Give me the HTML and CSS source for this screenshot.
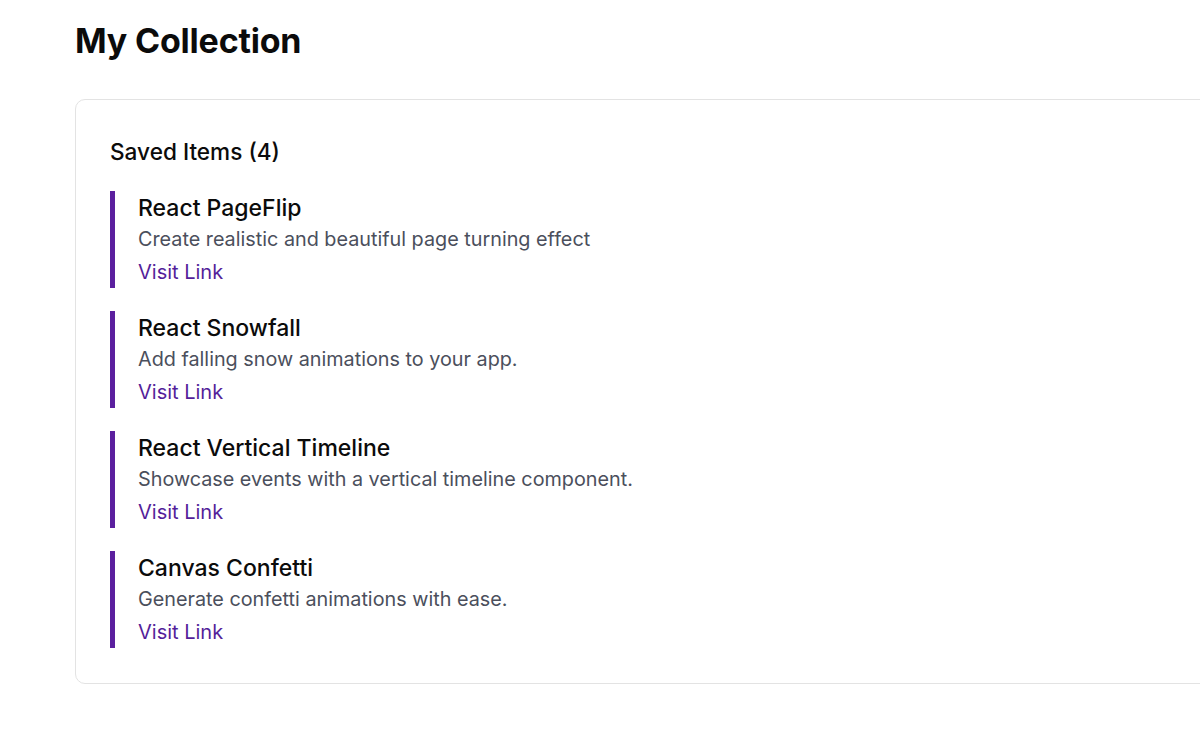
FILE: index.html
```html
<!DOCTYPE html>
<html lang="en">
<head>
<meta charset="utf-8">
<title>My Collection</title>
<link rel="stylesheet" href="styles.css">
</head>
<body>
<main class="page">
  <h1 class="page-title">My Collection</h1>
  <section class="card">
    <h2 class="card-title">Saved Items (4)</h2>
    <ul class="items">
      <li class="item">
        <h3 class="item-title">React PageFlip</h3>
        <p class="item-desc">Create realistic and beautiful page turning effect</p>
        <a class="item-link" href="#">Visit Link</a>
      </li>
      <li class="item">
        <h3 class="item-title">React Snowfall</h3>
        <p class="item-desc">Add falling snow animations to your app.</p>
        <a class="item-link" href="#">Visit Link</a>
      </li>
      <li class="item">
        <h3 class="item-title">React Vertical Timeline</h3>
        <p class="item-desc">Showcase events with a vertical timeline component.</p>
        <a class="item-link" href="#">Visit Link</a>
      </li>
      <li class="item">
        <h3 class="item-title">Canvas Confetti</h3>
        <p class="item-desc">Generate confetti animations with ease.</p>
        <a class="item-link" href="#">Visit Link</a>
      </li>
    </ul>
  </section>
</main>
</body>
</html>
```

FILE: styles.css
```css
html, body {
  margin: 0;
  padding: 0;
  background: #ffffff;
  overflow: hidden;
}
body {
  font-family: Inter, "Noto Sans", Arial, sans-serif;
  color: #111111;
}
.page {
  padding: 20px 0 0 75px;
}
.page-title {
  margin: 0;
  font-size: 34px;
  line-height: 42px;
  font-weight: 700;
  color: #0b0b0b;
  letter-spacing: -0.2px;
}
.card {
  margin-top: 37px;
  width: 1200px;
  border: 1px solid #e3e3e3;
  border-radius: 10px;
  padding: 36px 34px 35px 34px;
  box-sizing: border-box;
}
.card-title {
  margin: 0 0 23px 0;
  font-size: 22.6px;
  line-height: 32px;
  font-weight: 500;
  color: #0b0b0b;
}
.items {
  list-style: none;
  margin: 0;
  padding: 0;
  display: flex;
  flex-direction: column;
  gap: 23px;
}
.item {
  border-left: 5px solid #5b1f9e;
  padding: 1.5px 0 1.5px 23px;
  display: flex;
  flex-direction: column;
}
.item-title {
  margin: 0;
  font-size: 23px;
  line-height: 30px;
  font-weight: 500;
  color: #0b0b0b;
}
.item-desc {
  margin: 1px 0 0 0;
  font-size: 19.8px;
  line-height: 30px;
  color: #4b4f5c;
}
.item-link {
  margin-top: 3px;
  font-size: 20px;
  line-height: 30px;
  color: #541f9a;
  text-decoration: none;
}
```
